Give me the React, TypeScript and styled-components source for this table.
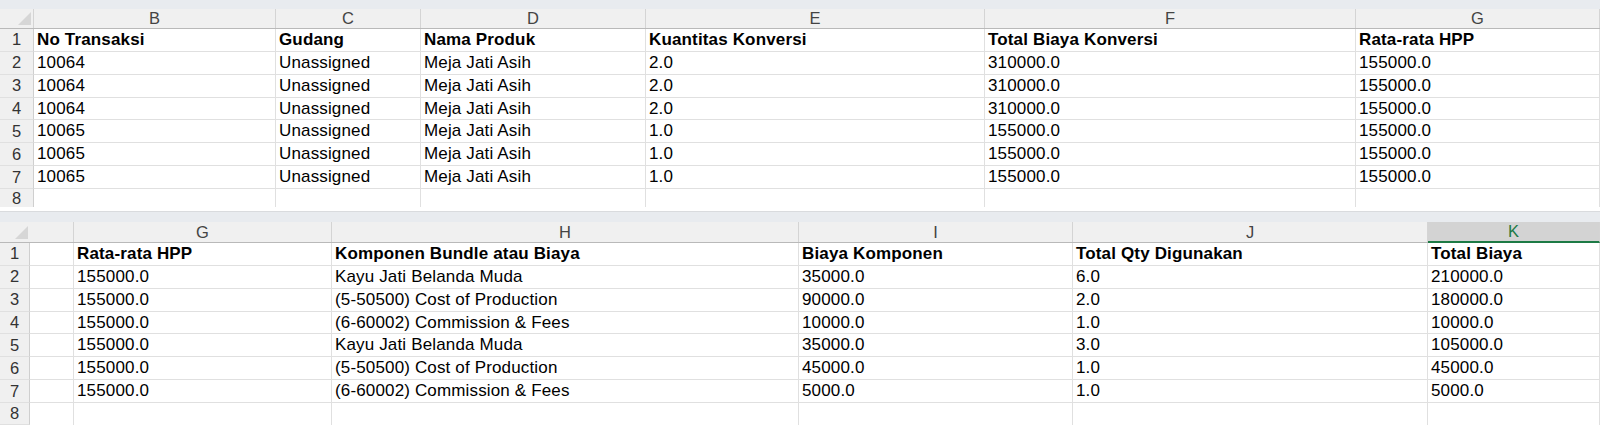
import { FC } from "react";
import styled, { createGlobalStyle, css } from "styled-components";

const GlobalStyle = createGlobalStyle`
    * { box-sizing: border-box; }
    body {
        margin: 0;
        background: #ffffff;
        font-family: "Liberation Sans", Arial, sans-serif;
        overflow: hidden;
    }
`

const ROW_H = 22.86;

const Page = styled.div`
    display: flex;
    flex-direction: column;
    width: 1600px;
    height: 425px;
    overflow: hidden;
`
const Band = styled.div<{ $h: number }>`
    height: ${(p) => p.$h}px;
    background-color: #e8ebef;
    flex-shrink: 0;
`
const Gap = styled.div`
    height: 5px;
    background: #ffffff;
    border-bottom: 1px solid #d9dbde;
    flex-shrink: 0;
`
const Grid = styled.div<{ $cols: string; $h: number }>`
    display: grid;
    grid-template-columns: ${(p) => p.$cols};
    height: ${(p) => p.$h}px;
    flex-shrink: 0;
`
const HeaderRow = styled(Grid)`
    background-color: #f0f0f0;
    border-bottom: 1px solid #b9b9b9;
`
const Corner = styled.div<{ $tri: number }>`
    display: flex;
    align-items: flex-end;
    padding-left: ${(p) => p.$tri}px;
    padding-bottom: 3px;
    border-right: 1px solid #d4d4d4;
`
const Triangle = styled.div`
    width: 13px;
    height: 13px;
    background-color: #d6d6d6;
    clip-path: polygon(100% 0, 100% 100%, 0 100%);
`
const ColLetter = styled.div<{ $active?: boolean }>`
    display: flex;
    align-items: center;
    justify-content: center;
    font-size: 16.5px;
    color: #444444;
    border-right: 1px solid #d4d4d4;
    ${(p) => p.$active && css`
        background-color: #d3d3d3;
        color: #1d7a45;
        border-bottom: 2px solid #1d7a45;
        margin-bottom: -1px;
    `}
`
const RowNum = styled.div`
    display: flex;
    align-items: center;
    justify-content: center;
    font-size: 16.5px;
    color: #333333;
    background-color: #f0f0f0;
    border-right: 1px solid #cfcfcf;
    border-bottom: 1px solid #e0e0e0;
`
const Cell = styled.div<{ $bold?: boolean; $last?: boolean }>`
    display: flex;
    align-items: center;
    padding-left: 3px;
    font-size: 17px;
    letter-spacing: 0.15px;
    color: #000000;
    white-space: nowrap;
    overflow: hidden;
    font-weight: ${(p) => (p.$bold ? 700 : 400)};
    border-right: 1px solid #e0e0e0;
    border-bottom: ${(p) => (p.$last ? "none" : "1px solid #e0e0e0")};
`

type SheetProps = {
    cols: string;
    headCols: string;
    cornerTri: number;
    letters: string[];
    active?: string;
    blankLead?: boolean;
    headH: number;
    lastH: number;
    rows: string[][];
};

const Sheet: FC<SheetProps> = ({ cols, headCols, cornerTri, letters, active, blankLead, headH, lastH, rows }) => (
    <>
        <HeaderRow $cols={headCols} $h={headH}>
            <Corner $tri={cornerTri}><Triangle /></Corner>
            {letters.map((l) => (
                <ColLetter key={l} $active={l === active}>{l}</ColLetter>
            ))}
        </HeaderRow>
        {[...rows, letters.map(() => "")].map((r, i) => {
            const last = i === rows.length;
            return (
                <Grid key={i} $cols={cols} $h={last ? lastH : ROW_H}>
                    <RowNum>{i + 1}</RowNum>
                    {blankLead && <Cell $last={last} />}
                    {r.map((v, j) => (
                        <Cell key={j} $bold={i === 0} $last={last}>{v}</Cell>
                    ))}
                </Grid>
            );
        })}
    </>
);

const topRows = [
    ["No Transaksi", "Gudang", "Nama Produk", "Kuantitas Konversi", "Total Biaya Konversi", "Rata-rata HPP"],
    ["10064", "Unassigned", "Meja Jati Asih", "2.0", "310000.0", "155000.0"],
    ["10064", "Unassigned", "Meja Jati Asih", "2.0", "310000.0", "155000.0"],
    ["10064", "Unassigned", "Meja Jati Asih", "2.0", "310000.0", "155000.0"],
    ["10065", "Unassigned", "Meja Jati Asih", "1.0", "155000.0", "155000.0"],
    ["10065", "Unassigned", "Meja Jati Asih", "1.0", "155000.0", "155000.0"],
    ["10065", "Unassigned", "Meja Jati Asih", "1.0", "155000.0", "155000.0"],
];

const bottomRows = [
    ["Rata-rata HPP", "Komponen Bundle atau Biaya", "Biaya Komponen", "Total Qty Digunakan", "Total Biaya"],
    ["155000.0", "Kayu Jati Belanda Muda", "35000.0", "6.0", "210000.0"],
    ["155000.0", "(5-50500) Cost of Production", "90000.0", "2.0", "180000.0"],
    ["155000.0", "(6-60002) Commission & Fees", "10000.0", "1.0", "10000.0"],
    ["155000.0", "Kayu Jati Belanda Muda", "35000.0", "3.0", "105000.0"],
    ["155000.0", "(5-50500) Cost of Production", "45000.0", "1.0", "45000.0"],
    ["155000.0", "(6-60002) Commission & Fees", "5000.0", "1.0", "5000.0"],
];

const App: FC = () => (
    <Page>
        <GlobalStyle />
        <Band $h={9} />
        <Sheet
            cols="34px 242px 145px 225px 339px 371px 1fr"
            headCols="34px 242px 145px 225px 339px 371px 1fr"
            cornerTri={18}
            letters={["B", "C", "D", "E", "F", "G"]}
            headH={20}
            lastH={18}
            rows={topRows}
        />
        <Gap />
        <Band $h={10} />
        <Sheet
            cols="30px 44px 258px 467px 274px 355px 1fr"
            headCols="74px 258px 467px 274px 355px 1fr"
            cornerTri={15}
            letters={["G", "H", "I", "J", "K"]}
            active="K"
            blankLead
            headH={21}
            lastH={22}
            rows={bottomRows}
        />
    </Page>
);

export default App;
